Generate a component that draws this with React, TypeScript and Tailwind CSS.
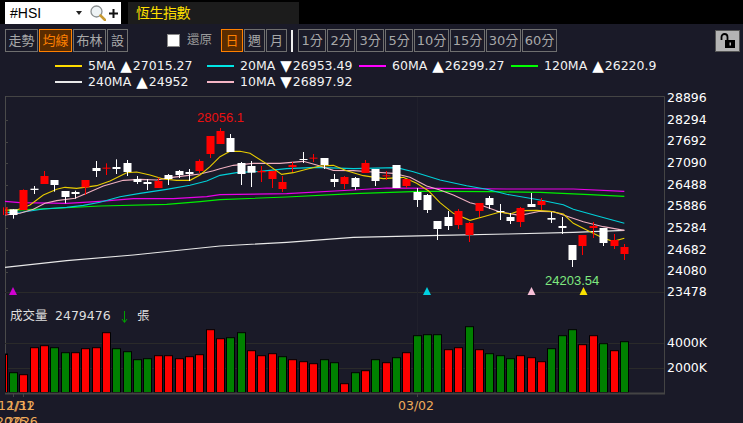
const FONT = "font-['DejaVu_Sans','Noto_Sans_CJK_TC',sans-serif]"

const RED = '#ff0000'
const GREEN = '#008000'

// x position of the n-th session
const barX = (i: number) => Math.floor(3 + 10.357 * i) + 0.5

// [bodyTop, bodyBottom, wickTop, wickBottom, colour]
const candles: [number, number, number, number, 'r' | 'w'][] = [
  [322, 345, 322, 345, 'r'], [328, 345, 328, 356, 'w'], [270, 330, 268, 330, 'r'], [266, 270, 258, 282, 'w'],
  [228, 252, 213, 252, 'r'], [240, 255, 240, 275, 'w'], [273, 291, 273, 310, 'w'], [276, 282, 272, 296, 'w'],
  [240, 262, 240, 285, 'r'], [204, 213, 183, 231, 'w'], [203, 205, 190, 225, 'r'], [201, 207, 178, 222, 'w'],
  [189, 216, 180, 228, 'w'], [237, 246, 228, 252, 'w'], [246, 252, 237, 270, 'w'], [243, 264, 233, 264, 'r'],
  [225, 237, 222, 255, 'w'], [213, 225, 210, 234, 'w'], [216, 222, 207, 243, 'w'], [183, 213, 178, 219, 'r'],
  [108, 162, 108, 174, 'r'], [93, 132, 84, 132, 'r'], [114, 156, 102, 156, 'w'], [189, 222, 186, 255, 'w'],
  [198, 218, 183, 261, 'w'], [213, 217, 198, 246, 'r'], [213, 237, 213, 264, 'r'], [246, 267, 228, 276, 'r'],
  [195, 201, 186, 216, 'r'], [177, 180, 156, 189, 'w'], [173, 175, 162, 186, 'r'], [174, 195, 174, 207, 'w'],
  [237, 246, 222, 261, 'w'], [231, 252, 228, 267, 'r'], [234, 261, 231, 270, 'w'], [189, 219, 180, 219, 'r'],
  [207, 243, 207, 258, 'w'], [226, 229, 213, 240, 'r'], [195, 264, 195, 264, 'w'], [237, 258, 237, 264, 'r'],
  [276, 300, 264, 321, 'w'], [285, 330, 282, 339, 'w'], [363, 387, 363, 420, 'w'], [351, 378, 333, 390, 'w'],
  [333, 375, 327, 387, 'r'], [369, 405, 366, 426, 'r'], [309, 333, 309, 351, 'r'], [294, 315, 288, 327, 'w'],
  [333, 336, 312, 360, 'w'], [351, 363, 339, 372, 'w'], [324, 366, 321, 381, 'r'], [312, 321, 279, 321, 'w'],
  [303, 315, 294, 330, 'r'], [354, 359, 336, 369, 'w'], [378, 384, 351, 402, 'w'], [435, 480, 435, 501, 'w'],
  [405, 438, 405, 465, 'r'], [378, 384, 366, 414, 'r'], [384, 429, 384, 438, 'w'], [420, 438, 402, 447, 'r'],
  [441, 462, 432, 480, 'r']
]

// volume bar tops, read off the picture, with the colour of each bar
const volumes: [number, 'r' | 'g'][] = [
  [354, 'r'], [372.7, 'g'], [374.7, 'r'], [347.7, 'r'], [345.7, 'r'], [347.7, 'g'], [352.7, 'g'], [352.7, 'r'],
  [348.7, 'r'], [347.7, 'r'], [332.7, 'r'], [348.7, 'g'], [351.7, 'g'], [359.7, 'g'], [358.7, 'g'], [355.7, 'r'],
  [355.7, 'r'], [358.7, 'r'], [356.7, 'r'], [354.7, 'r'], [329.7, 'r'], [338.7, 'r'], [337.7, 'g'], [332.7, 'g'],
  [350.7, 'r'], [355.7, 'r'], [353.7, 'r'], [356.7, 'g'], [359.7, 'r'], [361.7, 'r'], [363.7, 'r'], [359.7, 'g'],
  [362.7, 'g'], [383.7, 'r'], [372.7, 'g'], [370.7, 'r'], [359.7, 'g'], [362.7, 'r'], [357.7, 'g'], [352.7, 'r'],
  [335.7, 'g'], [334.7, 'g'], [334.7, 'g'], [349.7, 'r'], [347.7, 'r'], [326.7, 'g'], [349.7, 'r'], [353.7, 'g'],
  [355.7, 'g'], [358.7, 'g'], [355.7, 'r'], [357.7, 'r'], [361.7, 'r'], [348.7, 'g'], [335.7, 'g'], [329.7, 'g'],
  [344.7, 'r'], [335.7, 'r'], [343.7, 'g'], [350.7, 'r'], [341.7, 'g']
]

// moving averages as [x, y] in 3x crop units, split at the crop edges (0, 660, 1320)
const toPoints = (segments: number[][][]) =>
  segments
    .flatMap((seg, n) => seg.map(([x, y]) => `${(x + n * 660) / 3},${100 + y / 3}`))
    .join(' ')

const ma5 = toPoints([
  [[15, 330], [50, 330], [90, 315], [130, 285], [170, 268], [195, 262], [230, 265], [290, 257], [330, 243], [380, 218], [410, 216], [450, 225], [490, 237], [530, 241], [570, 241], [600, 225], [630, 200]],
  [[0, 170], [30, 154], [60, 154], [90, 160], [130, 185], [185, 223], [220, 218], [260, 208], [300, 198], [340, 196], [380, 212], [430, 227], [490, 236], [550, 232], [590, 250], [625, 272]],
  [[0, 308], [40, 340], [90, 361], [130, 350], [180, 336], [210, 342], [240, 332], [290, 331], [330, 334], [370, 342], [400, 370], [440, 390], [490, 415], [520, 424], [553, 415]]
])
const ma10 = toPoints([
  [[15, 345], [60, 340], [100, 328], [135, 310], [170, 302], [225, 295], [260, 280], [310, 258], [370, 241], [420, 238], [470, 240], [510, 233], [560, 227], [600, 222], [640, 212]],
  [[0, 206], [40, 196], [100, 190], [180, 190], [250, 184], [290, 195], [340, 211], [400, 212], [460, 216], [520, 220], [570, 232], [620, 258]],
  [[0, 270], [40, 285], [90, 308], [130, 318], [180, 336], [240, 346], [300, 334], [340, 335], [370, 345], [430, 365], [490, 380], [553, 391]]
])
const ma20 = toPoints([
  [[15, 338], [70, 336], [130, 327], [200, 322], [250, 316], [300, 307], [360, 290], [420, 280], [500, 268], [570, 256], [620, 243]],
  [[0, 226], [50, 218], [120, 214], [200, 206], [290, 202], [400, 206], [530, 203], [580, 215]],
  [[0, 240], [80, 257], [140, 268], [200, 283], [300, 300], [370, 314], [400, 328], [470, 347], [553, 370]]
])
const ma60 = toPoints([
  [[15, 304], [60, 308], [200, 310], [300, 304], [400, 296], [520, 296], [620, 290]],
  [[0, 284], [200, 281], [400, 270], [500, 264]],
  [[0, 265], [200, 267], [400, 267], [553, 274]]
])
const ma120 = toPoints([
  [[15, 332], [100, 328], [300, 318], [500, 313], [600, 305]],
  [[0, 299], [200, 291], [400, 281], [600, 274]],
  [[0, 274], [150, 275], [300, 277], [450, 284], [553, 289]]
])
const ma240 = toPoints([
  [[15, 502], [200, 482], [400, 465]],
  [[0, 438], [200, 427], [400, 412]],
  [[0, 406], [200, 402], [400, 397], [553, 391]]
])

const priceLabels: [string, number][] = [
  ['28896', 97], ['28294', 119], ['27692', 140], ['27090', 162], ['26488', 184],
  ['25886', 205], ['25284', 227], ['24682', 249], ['24080', 270], ['23478', 291]
]

const legend = [
  { line: 'bg-[#ffdc00]', name: '5MA', arrow: '▲', value: '27015.27' },
  { line: 'bg-[#00e5e5]', name: '20MA', arrow: '▼', value: '26953.49' },
  { line: 'bg-[#ff00ff]', name: '60MA', arrow: '▲', value: '26299.27' },
  { line: 'bg-[#00ff00]', name: '120MA', arrow: '▲', value: '26220.9' },
  { line: 'bg-[#e8e8e8]', name: '240MA', arrow: '▲', value: '24952' },
  { line: 'bg-[#f5b5c5]', name: '10MA', arrow: '▼', value: '26897.92' }
]

function ToolButton({ label, width, active }: { label: string; width: string; active?: boolean }) {
  return (
    <button
      className={`flex h-[23px] shrink-0 items-center justify-center border text-[13px] ${width} ${
        active ? 'border-[#ff8000] bg-[#5a2c00] text-[#ff8000]' : 'border-[#6f6f6f] text-[#a8a8a8]'
      }`}
    >
      {label}
    </button>
  )
}

function Chart() {
  return (
    <svg viewBox="0 90 743 333" className="block h-[333px] w-[743px]">
      {/* frame and grid */}
      <path d="M5.500 96.500H664.500V393" fill="none" stroke="#444" />
      <path d="M5.500 96V394" stroke="#4a4a4a" />
      <path d="M5 292.500H664M5 343.500H664M5 368.500H664" stroke="#2a2a2a" />
      <path d="M417.500 97V392" stroke="#20202c" />
      {[120, 142, 163, 185, 207, 228, 250, 272].map((y) => (
        <path key={y} d={`M5 ${y + 0.5}H8`} stroke="#444" />
      ))}

      {/* moving averages */}
      <g fill="none" strokeWidth="1.1">
        <polyline points={ma240} stroke="#e8e8e8" />
        <polyline points={ma120} stroke="#00ee00" />
        <polyline points={ma60} stroke="#e800e8" />
        <polyline points={ma20} stroke="#00d0d8" />
        <polyline points={ma10} stroke="#f0b0c0" />
        <polyline points={ma5} stroke="#e8cc00" />
      </g>

      {/* candles */}
      {candles.map(([top, bottom, wickTop, wickBottom, c], i) => {
        const x = barX(i)
        const fill = c === 'r' ? RED : '#ffffff'
        return (
          <g key={i}>
            <path d={`M${x} ${100 + wickTop / 3}V${100 + wickBottom / 3}`} stroke={fill} />
            <rect
              x={Math.max(x - 4, 5.5)}
              y={100 + top / 3}
              width={i === 0 ? 2 : 8}
              height={Math.max((bottom - top) / 3, 1)}
              fill={fill}
            />
          </g>
        )
      })}

      <text x="197" y="122" fill="#e81010" fontSize="13" fontFamily="Liberation Sans, sans-serif">
        28056.1
      </text>
      <text x="545" y="285" fill="#7fe87f" fontSize="13" fontFamily="Liberation Sans, sans-serif">
        24203.54
      </text>

      {/* signal markers */}
      <polygon points="13,287 17,295 9,295" fill="#d000d0" />
      <polygon points="427,287 431,295 423,295" fill="#00d0e0" />
      <polygon points="531.500,287 535.500,295 527.500,295" fill="#f8c0d8" />
      <polygon points="583.500,287 587.500,295 579.500,295" fill="#f8e000" />

      {/* price axis */}
      <g fill="#ffffff" fontSize="12.5" fontFamily="DejaVu Sans, sans-serif">
        {priceLabels.map(([label, y]) => (
          <text key={label} x="667" y={y + 5}>
            {label}
          </text>
        ))}
        <text x="667" y="347">4000K</text>
        <text x="667" y="372">2000K</text>
      </g>

      {/* volume caption */}
      <text x="10" y="320" fill="#dddddd" fontSize="12.5" fontFamily="DejaVu Sans, Noto Sans CJK TC, sans-serif">
        成交量
      </text>
      <text x="55" y="320" fill="#dddddd" fontSize="12.5" fontFamily="DejaVu Sans, sans-serif">
        2479476
      </text>
      <path d="M124.500 311V322M122 319l2.500 3.500 2.500-3.500" fill="none" stroke="#00a000" />
      <text x="137" y="320" fill="#dddddd" fontSize="12.5" fontFamily="Noto Sans CJK TC, sans-serif">
        張
      </text>

      {/* volume bars */}
      {volumes.map(([top, c], i) => {
        const x = barX(i)
        return (
          <rect
            key={i}
            x={i === 0 ? 5.5 : x - 4}
            y={top}
            width={i === 0 ? 2 : 8}
            height={392.5 - top}
            fill={c === 'r' ? RED : GREEN}
            stroke="#000000"
          />
        )
      })}
      <path d="M5 393.500H665" stroke="#444" strokeWidth="2" />
      <path d="M13.500 394v3M23.500 394v3M417.500 394v3" stroke="#444" />

      {/* date axis */}
      <g fill="#f0ab5a" fontSize="12.5" fontFamily="DejaVu Sans, sans-serif">
        <text x="-2" y="410">12/31</text>
        <text x="7" y="410">1/12</text>
        <text x="-4" y="426">2025</text>
        <text x="6" y="426">2026</text>
        <text x="398" y="410">03/02</text>
      </g>
    </svg>
  )
}

export default function App() {
  return (
    <div className={`flex h-[423px] w-[743px] flex-col overflow-hidden bg-[#1a1a28] ${FONT}`}>
      {/* search bar */}
      <div className="flex h-[24px] shrink-0 items-end gap-[7px] bg-black pl-[5px]">
        <div className="flex h-[22px] w-[116px] items-center bg-white pl-[5px] font-['Liberation_Sans',sans-serif] text-[14px] text-black">
          <span className="w-[66px]">#HSI</span>
          <span className="h-0 w-0 border-x-[3px] border-t-[4px] border-x-transparent border-t-[#222]" />
          <svg viewBox="0 0 16 16" className="ml-[8px] h-[16px] w-[16px]">
            <circle cx="6.500" cy="6.500" r="5.500" fill="#eef3f5" stroke="#8a8f90" strokeWidth="1.300" />
            <path d="M10.500 10.500L15 15" stroke="#c89a30" strokeWidth="2.500" strokeLinecap="round" />
          </svg>
          <svg viewBox="0 0 9 9" className="ml-[3px] h-[9px] w-[9px]">
            <path d="M4.500 0V9M0 4.500H9" stroke="#111" strokeWidth="2" />
          </svg>
        </div>
        <div className="flex h-[22px] w-[171px] items-center bg-[#1c1c1c] pl-[8px] text-[14px] tracking-[-0.5px] text-[#ffe000]">
          恆生指數
        </div>
      </div>

      {/* period toolbar */}
      <div className="mt-[5px] flex h-[23px] shrink-0 items-center pl-[5px]">
        <div className="flex gap-px">
          <ToolButton label="走勢" width="w-[33px]" />
          <ToolButton label="均線" width="w-[33px]" active />
          <ToolButton label="布林" width="w-[33px]" />
          <ToolButton label="設" width="w-[21px]" />
        </div>
        <span className="ml-[39px] h-[13px] w-[13px] border border-[#888] bg-white" />
        <span className="ml-[7px] text-[12.5px] text-[#9a9a9a]">還原</span>
        <div className="ml-[9px] flex gap-px">
          <ToolButton label="日" width="w-[22px]" active />
          <ToolButton label="週" width="w-[21px]" />
          <ToolButton label="月" width="w-[21px]" />
        </div>
        <span className="ml-[4px] h-[22px] w-[2px] bg-[#eeeeee]" />
        <div className="ml-[5px] flex gap-px">
          <ToolButton label="1分" width="w-[28px]" />
          <ToolButton label="2分" width="w-[28px]" />
          <ToolButton label="3分" width="w-[28px]" />
          <ToolButton label="5分" width="w-[28px]" />
          <ToolButton label="10分" width="w-[35px]" />
          <ToolButton label="15分" width="w-[35px]" />
          <ToolButton label="30分" width="w-[35px]" />
          <ToolButton label="60分" width="w-[35px]" />
        </div>
        <button className="ml-auto mr-[3px] flex h-[22px] w-[25px] items-center justify-center border border-[#555] bg-[#b4b4b4]">
          <svg viewBox="0 0 16 16" className="h-[16px] w-[16px]">
            <path d="M1.500 7V4a3 3 0 0 1 6 0v3" fill="none" stroke="#000" strokeWidth="1.800" />
            <rect x="5" y="7" width="10" height="8" fill="#000" />
            <rect x="9.500" y="9.500" width="1.500" height="3" fill="#b4b4b4" />
          </svg>
        </button>
      </div>

      {/* moving average legend */}
      <div className="mt-[6px] grid h-[32px] shrink-0 grid-cols-[repeat(4,152px)] grid-rows-[16px_16px] pl-[55px] text-[12.5px] leading-[16px] text-[#f2f2f2]">
        {legend.map((item) => (
          <div key={item.name} className="flex h-[16px] items-center">
            <span className={`mr-[6px] h-[2px] w-[27px] ${item.line}`} />
            <span>{item.name}</span>
            <span className="ml-[5px] mr-px text-[15px] leading-none text-white">{item.arrow}</span>
            <span>{item.value}</span>
          </div>
        ))}
      </div>

      <Chart />
    </div>
  )
}
